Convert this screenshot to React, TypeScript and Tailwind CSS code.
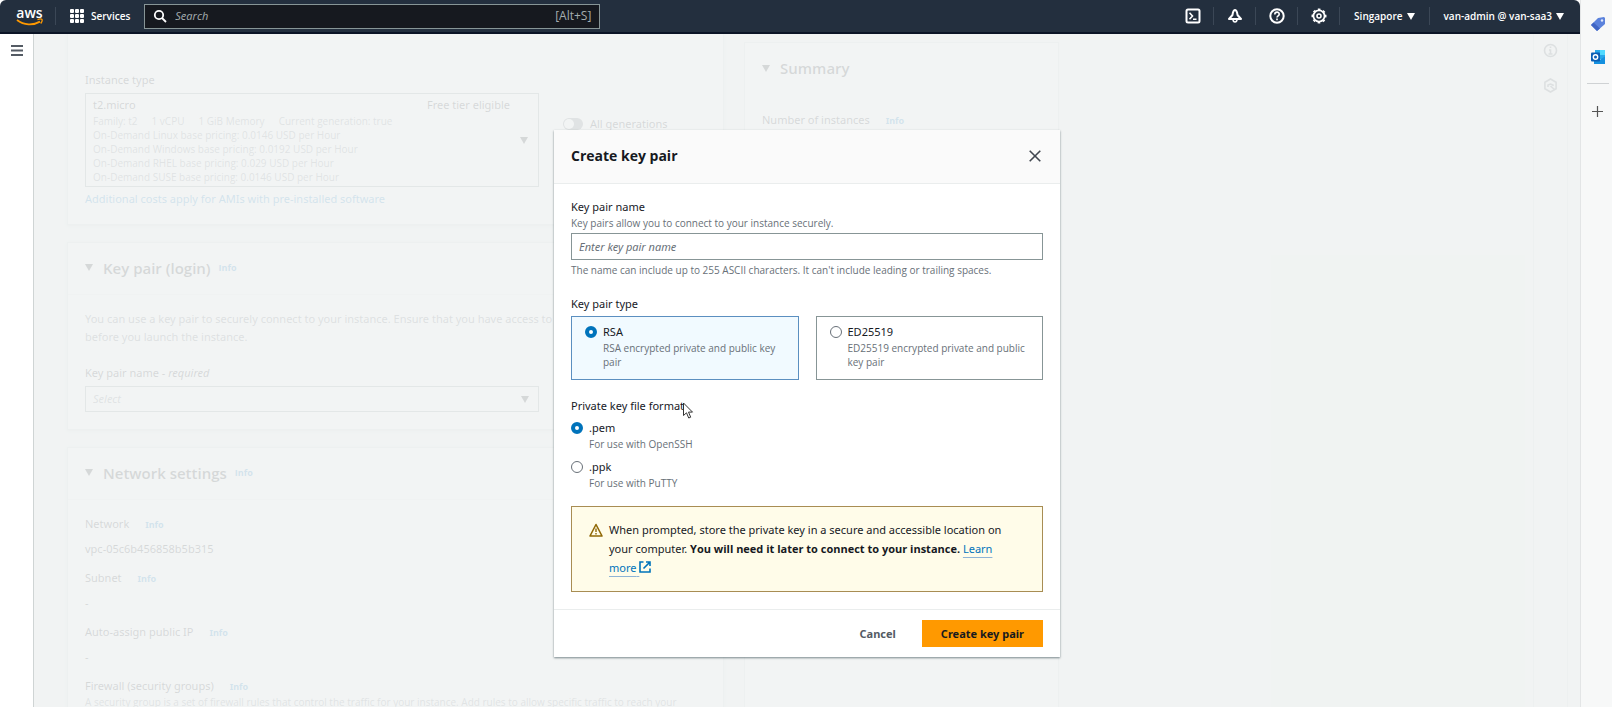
import type { ReactNode } from 'react';

function Caret({ className = '' }: { className?: string }) {
  return (
    <svg viewBox="0 0 8 7" className={`h-[7px] w-2 shrink-0 fill-current ${className}`} aria-hidden="true">
      <path d="M0 0h8L4 7z" />
    </svg>
  );
}

function Info() {
  return <a href="#" className="text-[9px] font-bold text-[#0073bb]">Info</a>;
}

function AwsLogo() {
  return (
    <span className="flex w-[27px] flex-col items-center">
      <span className="text-[14px] font-semibold leading-[11px] text-white">aws</span>
      <svg viewBox="0 0 27 8" className="h-2 w-[27px]" fill="none" stroke="#ff9900" aria-hidden="true">
        <path d="M1 2c7 5.400 16 5.600 23 1.600" strokeWidth="1.800" />
        <path d="M21.500 1.600c2-.8 4-.8 4.500-.1.400.8-.2 2.600-1.300 4" strokeWidth="1.300" />
      </svg>
    </span>
  );
}

function TopIcon({ label, children }: { label: string; children: ReactNode }) {
  return (
    <button type="button" aria-label={label} className="flex h-[18px] w-[42px] items-center justify-center border-r border-[#3b4756]">
      <svg viewBox="0 0 16 16" className="size-4" fill="none" stroke="white" strokeWidth="2" aria-hidden="true">{children}</svg>
    </button>
  );
}

function TopBar() {
  return (
    <header className="flex h-[34px] shrink-0 items-center rounded-t-md border-b-2 border-[#0b1426] bg-[#232f3e] px-4 font-['Open_Sans',sans-serif] text-[10px] font-semibold text-white">
      <a href="#" aria-label="AWS home"><AwsLogo /></a>
      <span className="ml-3 h-[18px] w-px bg-[#3b4756]" />
      <button type="button" className="ml-3.5 flex items-center gap-[7px]">
        <svg viewBox="0 0 14 14" className="size-3.5 fill-white" aria-hidden="true">
          {[0, 5, 10].map((y) => [0, 5, 10].map((x) => <rect key={`${x}-${y}`} x={x} y={y} width="4" height="4" rx="1" />))}
        </svg>
        Services
      </button>
      <label className="ml-3.5 flex h-[25px] w-full max-w-[456px] items-center gap-2 border border-[#879596] bg-[#16191f] px-2 font-normal text-[#a5adb0]">
        <svg viewBox="0 0 14 14" className="size-3.5 shrink-0" fill="none" stroke="white" strokeWidth="1.800" aria-hidden="true">
          <circle cx="6" cy="6" r="4.200" />
          <path d="M9 9l4 4" />
        </svg>
        <input type="search" aria-label="Search" placeholder="Search" className="min-w-0 flex-1 bg-transparent text-[11px] outline-none placeholder:italic placeholder:text-[#a5adb0]" />
        <span className="text-[12px]">[Alt+S]</span>
      </label>
      <nav className="ml-auto flex shrink-0 items-center">
        <TopIcon label="CloudShell">
          <rect x="1.500" y="1.500" width="13" height="13" rx="1.500" />
          <path d="M4.500 4.800L7.500 8l-3 3.200M8 11.200h3.500" strokeWidth="1.600" />
        </TopIcon>
        <TopIcon label="Notifications">
          <path d="M8 2C6.200 2.300 5.800 4 5.500 7L2 11h12l-3.500-4C10.200 4 9.800 2.300 8 2z" strokeLinejoin="round" />
          <path d="M6 11.500c.3 3.400 3.700 3.400 4 0" strokeWidth="1.600" />
        </TopIcon>
        <TopIcon label="Help">
          <circle cx="8" cy="8" r="6.700" />
          <path d="M5.800 6.500C5.800 3.300 10.300 3.500 10.200 6.200 10.200 7.800 8 7.800 8 9.500M8 10.600v1.700" strokeWidth="1.600" />
        </TopIcon>
        <TopIcon label="Settings">
          <circle cx="8" cy="8" r="5.600" strokeWidth="1.800" />
          <circle cx="8" cy="8" r="6.700" strokeWidth="1.600" strokeDasharray="2.630 2.630" strokeDashoffset="1.315" />
          <circle cx="8" cy="8" r="2" strokeWidth="1.600" />
        </TopIcon>
        <button type="button" className="flex h-[18px] items-center gap-1 border-r border-[#3b4756] px-3.5">Singapore <Caret /></button>
        <button type="button" className="flex h-[18px] items-center gap-1 pl-3.5">van-admin @ van-saa3 <Caret /></button>
      </nav>
    </header>
  );
}

function Panel({ title, info, children }: { title: string; info?: boolean; children: ReactNode }) {
  return (
    <section className="border border-[#d5dbdb] bg-white shadow-sm">
      <h2 className="flex h-[52px] items-center gap-2 border-b border-[#eaeded] bg-[#fafafa] px-[17px] pb-0.5 font-['Open_Sans',sans-serif] text-[15px] font-semibold">
        <Caret className="mr-0.5" />
        {title}
        {info && <Info />}
      </h2>
      <div className="px-[17px]">{children}</div>
    </section>
  );
}

function Hint({ children, className = '' }: { children: ReactNode; className?: string }) {
  return <span className={`block font-['Open_Sans',sans-serif] text-[10px] leading-[14px] text-[#687078] ${className}`}>{children}</span>;
}

const pricing = [
  'On-Demand Linux base pricing: 0.0146 USD per Hour',
  'On-Demand Windows base pricing: 0.0192 USD per Hour',
  'On-Demand RHEL base pricing: 0.029 USD per Hour',
  'On-Demand SUSE base pricing: 0.0146 USD per Hour',
];

const network = [
  { name: 'Network', value: 'vpc-05c6b456858b5b315' },
  { name: 'Subnet', value: '-' },
  { name: 'Auto-assign public IP', value: '-' },
];

function LaunchForm() {
  return (
    <div className="grid w-full max-w-[992px] grid-cols-[minmax(0,1fr)_315px] items-start gap-5">
      <div className="flex flex-col gap-[17px]">
        <section className="border border-t-0 border-[#d5dbdb] bg-white px-[17px] pb-4 pt-[37px] shadow-sm">
          <div>Instance type</div>
          <div className="flex items-center gap-6">
            <button type="button" className="mt-1 flex w-[454px] items-center justify-between border border-[#879596] py-[2px] pl-[7px] pr-2.5 text-left">
              <span className="flex-1">
                <span className="flex justify-between pr-2.5"><span>t2.micro</span><span>Free tier eligible</span></span>
                <Hint>
                  <span className="flex gap-3.5"><span>Family: t2</span><span>1 vCPU</span><span>1 GiB Memory</span><span>Current generation: true</span></span>
                </Hint>
                {pricing.map((line) => <Hint key={line}>{line}</Hint>)}
              </span>
              <Caret />
            </button>
            <label className="-mt-7 flex items-center gap-[7px]">
              <input type="checkbox" role="switch" className="peer sr-only" />
              <span className="flex h-3 w-5 rounded-full bg-[#687078] p-px"><span className="size-2.5 rounded-full bg-white" /></span>
              All generations
            </label>
          </div>
          <a href="#" className="mt-[3px] inline-block text-[#0073bb]">Additional costs apply for AMIs with pre-installed software</a>
        </section>

        <Panel title="Key pair (login)" info>
          <p className="pr-7 pt-[15px] text-[#545b64]">
            You can use a key pair to securely connect to your instance. Ensure that you have access to the selected key pair before you launch the instance.
          </p>
          <label htmlFor="key-pair" className="mt-[18px] block">Key pair name - <i>required</i></label>
          <div className="relative mb-[17px] mt-1 w-[454px]">
            <select id="key-pair" className="h-[26px] w-full appearance-none border border-[#879596] px-[7px] italic text-[#687078]">
              <option>Select</option>
            </select>
            <Caret className="pointer-events-none absolute right-2.5 top-2.5" />
          </div>
        </Panel>

        <Panel title="Network settings" info>
          <dl className="pt-[15px]">
            {network.map(({ name, value }) => (
              <div key={name} className="pb-[11px]">
                <dt className="flex h-[18px] items-baseline gap-4">{name} <Info /></dt>
                <dd className="mt-[7px]">{value}</dd>
              </div>
            ))}
          </dl>
          <div className="flex h-[18px] items-baseline gap-4">Firewall (security groups) <Info /></div>
          <Hint>A security group is a set of firewall rules that control the traffic for your instance. Add rules to allow specific traffic to reach your</Hint>
        </Panel>
      </div>

      <section className="mt-2 border border-[#d5dbdb] bg-white px-[17px] pb-[600px] pt-4">
        <h2 className="flex items-center gap-2.5 font-['Open_Sans',sans-serif] text-[15px] font-semibold"><Caret /> Summary</h2>
        <div className="mt-[34px] flex items-baseline gap-4">Number of instances <Info /></div>
      </section>
    </div>
  );
}

const radio = 'mt-[3px] size-3 shrink-0 appearance-none rounded-full border border-[#687078] bg-white checked:border-4 checked:border-[#0073bb]';

function RadioOption({ name, label, hint, checked, tile }: { name: string; label: string; hint: string; checked?: boolean; tile?: boolean }) {
  return (
    <label className={tile
      ? 'flex flex-1 gap-1.5 border border-[#879596] px-[13px] pb-2.5 pt-1.5 has-checked:border-[#5b8fc0] has-checked:bg-[#f1faff]'
      : 'flex gap-1.5'}
    >
      <input type="radio" name={name} defaultChecked={checked} className={radio} />
      <span>
        <span className="block">{label}</span>
        <Hint>{hint}</Hint>
      </span>
    </label>
  );
}

function KeyPairDialog() {
  return (
    <div role="dialog" aria-labelledby="dialog-title" className="relative w-full max-w-[506px] bg-white shadow-[0_1px_2px_rgba(0,28,36,0.5)]">
      <div className="flex h-[54px] items-center justify-between border-b border-[#eaeded] bg-[#fafafa] pb-0.5 pl-[17px] pr-[19px]">
        <h1 id="dialog-title" className="font-['Open_Sans',sans-serif] text-[14px] font-bold">Create key pair</h1>
        <button type="button" aria-label="Close">
          <svg viewBox="0 0 12 12" className="size-3" fill="none" stroke="#414750" strokeWidth="1.600" aria-hidden="true"><path d="M.7.7l10.600 10.600M11.300.7L.7 11.300" /></svg>
        </button>
      </div>

      <div className="px-[17px] pb-[17px] pt-[14px]">
        <label htmlFor="key-name" className="block">Key pair name</label>
        <Hint>Key pairs allow you to connect to your instance securely.</Hint>
        <input id="key-name" type="text" placeholder="Enter key pair name" className="mt-[3px] block h-[27px] w-full border border-[#879596] px-[7px] outline-none placeholder:italic placeholder:text-[#687078]" />
        <Hint className="mt-[3px]">The name can include up to 255 ASCII characters. It can't include leading or trailing spaces.</Hint>

        <fieldset className="mt-[18px]">
          <legend>Key pair type</legend>
          <div className="mt-[3px] flex gap-[17px]">
            <RadioOption tile name="type" label="RSA" hint="RSA encrypted private and public key pair" checked />
            <RadioOption tile name="type" label="ED25519" hint="ED25519 encrypted private and public key pair" />
          </div>
        </fieldset>

        <fieldset className="mt-[17px]">
          <legend>Private key file format</legend>
          <div className="mt-1 flex flex-col gap-[7px]">
            <RadioOption name="format" label=".pem" hint="For use with OpenSSH" checked />
            <RadioOption name="format" label=".ppk" hint="For use with PuTTY" />
          </div>
        </fieldset>

        <div className="mt-4 flex gap-1.5 border border-[#a88d53] bg-[#fffce9] pb-[14px] pl-[17px] pr-8 pt-[13px]">
          <svg viewBox="0 0 14 14" className="mt-[3px] size-3.5 shrink-0" fill="none" stroke="#906806" strokeWidth="1.600" aria-hidden="true">
            <path d="M7 1.500l6 11.500H1z" strokeLinejoin="round" />
            <path d="M7 5.500v3.500M7 10v1.500" strokeWidth="1.400" />
          </svg>
          <p className="leading-[19px]">
            When prompted, store the private key in a secure and accessible location on your computer.{' '}
            <b className="font-['Open_Sans',sans-serif]">You will need it later to connect to your instance.</b>{' '}
            <a href="#" className="text-[#0073bb] underline decoration-[#8fb4d6] underline-offset-4">
              Learn more{' '}
              <svg viewBox="0 0 12 12" className="inline size-3 align-[-1px]" fill="none" stroke="#0073bb" strokeWidth="1.600" aria-hidden="true">
                <path d="M4.500 1H1v10h10V7.500M7 1h4v4M11 1L4.500 7.500" />
              </svg>
            </a>
          </p>
        </div>
      </div>

      <div className="flex items-center justify-end gap-[9px] border-t border-[#eaeded] px-[17px] py-2.5 font-bold">
        <button type="button" className="h-[27px] px-[17px] text-[#545b64]">Cancel</button>
        <button type="button" className="h-[27px] bg-[#ff9900] px-[19px] text-[#16191f]">Create key pair</button>
      </div>

      <svg viewBox="0 0 12 18" className="absolute left-[128px] top-[272px] h-[18px] w-3" fill="white" stroke="#333" aria-hidden="true">
        <path d="M1.500 1v12.500l3-2.700 2.200 5.200 2-.8-2.200-5.100h4z" />
      </svg>
    </div>
  );
}

function EdgeRail() {
  return (
    <aside className="flex w-8 shrink-0 flex-col items-center border-l border-[#e3e5e6] bg-[#f7f8f8] pl-0.5 pt-4">
      <button type="button" aria-label="Shopping">
        <svg viewBox="0 0 16 16" className="size-4" aria-hidden="true">
          <path d="M8 2l6-1 1 1v6l-8 7-6-6z" fill="#5b82dc" />
          <path d="M1 9l6 6 3-2.500L3.500 6.500z" fill="#3f65c4" />
          <circle cx="12" cy="4.500" r="1.200" fill="#dfe8fb" />
        </svg>
      </button>
      <button type="button" aria-label="Outlook" className="mt-[17px]">
        <svg viewBox="0 0 16 16" className="size-4" aria-hidden="true">
          <rect x="5" y="1" width="10" height="9" fill="#28a8ea" />
          <rect x="10" y="1" width="5" height="5" fill="#50d9ff" />
          <path d="M4 8l5.500 3L15 7.500V15H4z" fill="#1490df" />
          <rect x="1" y="3.500" width="9" height="9" rx="1" fill="#0a5eb4" />
          <circle cx="5.500" cy="8" r="2.200" fill="none" stroke="white" strokeWidth="1.400" />
        </svg>
      </button>
      <hr className="mt-[18px] w-[22px] border-[#cfd2d4]" />
      <button type="button" aria-label="Add" className="mt-[22px]">
        <svg viewBox="0 0 11 11" className="size-[11px]" stroke="#555" strokeWidth="1.200" aria-hidden="true"><path d="M5.500 0v11M0 5.500h11" /></svg>
      </button>
    </aside>
  );
}

export default function App() {
  return (
    <div className="flex h-screen overflow-hidden bg-white font-['Noto_Sans',sans-serif] text-[11px] leading-[18px] text-[#16191f]">
      <div className="flex min-w-0 flex-1 flex-col">
        <TopBar />
        <div className="flex min-h-0 flex-1">
          <nav className="w-[34px] shrink-0 border-r border-[#cfd4d4] bg-white pl-[11px] pt-[11px]">
            <button type="button" aria-label="Open navigation" className="block">
              <svg viewBox="0 0 12 11" className="h-[11px] w-3" stroke="#545b64" strokeWidth="1.800" aria-hidden="true"><path d="M0 1h12M0 5.500h12M0 10h12" /></svg>
            </button>
          </nav>
          <main className="relative flex min-w-0 flex-1 justify-between overflow-hidden bg-[#f0f3f2]">
            <div className="flex-1 pl-[33px]"><LaunchForm /></div>
            <div className="mr-3 w-[35px] shrink-0 border-x border-[#d5dbdb] px-[9px] pt-[9px]">
              <svg viewBox="0 0 15 15" className="size-[15px]" fill="none" stroke="#545b64" strokeWidth="1.600" aria-hidden="true">
                <circle cx="7.500" cy="7.500" r="6" />
                <path d="M7.500 3.500v1.500M6 7h1.500v4M5.500 11h4" />
              </svg>
              <svg viewBox="0 0 15 15" className="mt-5 size-[15px]" fill="none" stroke="#545b64" strokeWidth="1.600" aria-hidden="true">
                <path d="M7.500 1l5.600 3.200v6.600l-5.600 3.200-5.600-3.200V4.200z" />
                <path d="M5 9V7l2.500-1L10 7v1M7.500 8l4 3.500" />
              </svg>
            </div>
            <div className="absolute inset-0 flex items-start justify-center bg-[#f0f3f2]/88 pt-24">
              <KeyPairDialog />
            </div>
          </main>
        </div>
      </div>
      <EdgeRail />
    </div>
  );
}
